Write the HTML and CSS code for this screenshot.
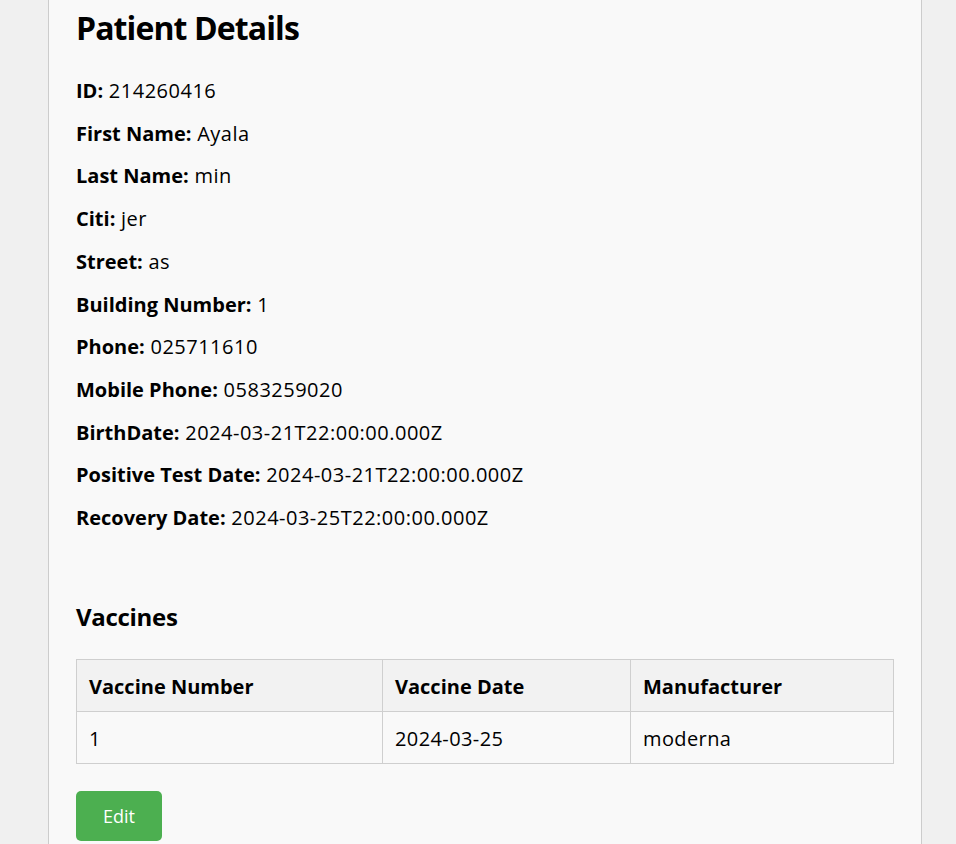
FILE: index.html
```html
<!DOCTYPE html>
<html lang="en">
<head>
<meta charset="utf-8">
<title>Patient Details</title>
<link rel="stylesheet" href="styles.css">
</head>
<body>
<div class="container">
  <h1 class="title">Patient Details</h1>
  <div class="fields">
    <p class="field"><strong>ID:</strong> 214260416</p>
    <p class="field"><strong>First Name:</strong> Ayala</p>
    <p class="field"><strong>Last Name:</strong> min</p>
    <p class="field"><strong>Citi:</strong> jer</p>
    <p class="field"><strong>Street:</strong> as</p>
    <p class="field"><strong>Building Number:</strong> 1</p>
    <p class="field"><strong>Phone:</strong> 025711610</p>
    <p class="field"><strong>Mobile Phone:</strong> 0583259020</p>
    <p class="field"><strong>BirthDate:</strong> 2024-03-21T22:00:00.000Z</p>
    <p class="field"><strong>Positive Test Date:</strong> 2024-03-21T22:00:00.000Z</p>
    <p class="field"><strong>Recovery Date:</strong> 2024-03-25T22:00:00.000Z</p>
  </div>
  <h2 class="subtitle">Vaccines</h2>
  <table class="vaccines">
    <colgroup>
      <col class="col-num">
      <col class="col-date">
      <col class="col-man">
    </colgroup>
    <thead>
      <tr><th>Vaccine Number</th><th>Vaccine Date</th><th>Manufacturer</th></tr>
    </thead>
    <tbody>
      <tr><td>1</td><td>2024-03-25</td><td>moderna</td></tr>
    </tbody>
  </table>
  <button class="edit-btn" type="button">Edit</button>
</div>
</body>
</html>
```

FILE: styles.css
```css
html, body {
  margin: 0;
  padding: 0;
}
body {
  background: #f0f0f0;
  font-family: "Open Sans", "Noto Sans", sans-serif;
  color: #000;
}
.container {
  margin-left: 48px;
  width: 818px;
  padding: 0 27px 40px;
  background: #f9f9f9;
  border-left: 1px solid #cccccc;
  border-right: 1px solid #cccccc;
}
.title {
  margin: 0;
  padding-top: 8px;
  font-size: 32px;
  line-height: 40px;
  font-weight: 700;
  letter-spacing: -0.9px;
}
.fields {
  padding-top: 30px;
}
.field {
  margin: 0 0 16px;
  font-size: 20px;
  line-height: 26.7px;
  letter-spacing: 0.5px;
}
.field:last-child {
  margin-bottom: 0;
}
.field strong {
  font-weight: 700;
  letter-spacing: 0;
}
.subtitle {
  margin: 69px 0 0;
  font-size: 24px;
  line-height: 32px;
  font-weight: 700;
  letter-spacing: -0.3px;
}
.vaccines {
  margin-top: 26px;
  width: 100%;
  border-collapse: collapse;
  table-layout: fixed;
  font-size: 20px;
  line-height: 27px;
}
.col-num { width: 306px; }
.col-date { width: 248px; }
.vaccines th,
.vaccines td {
  border: 1px solid #cfcfcf;
  padding: 13px 12px 11px;
  text-align: left;
}
.vaccines th {
  background: #f2f2f2;
  font-weight: 700;
}
.vaccines td {
  letter-spacing: 0.4px;
}
.edit-btn {
  display: block;
  margin-top: 27px;
  height: 50px;
  padding: 0 27px;
  background: #4caf50;
  color: #fff;
  border: none;
  border-radius: 5px;
  font-family: inherit;
  font-size: 18px;
  cursor: pointer;
}
```
